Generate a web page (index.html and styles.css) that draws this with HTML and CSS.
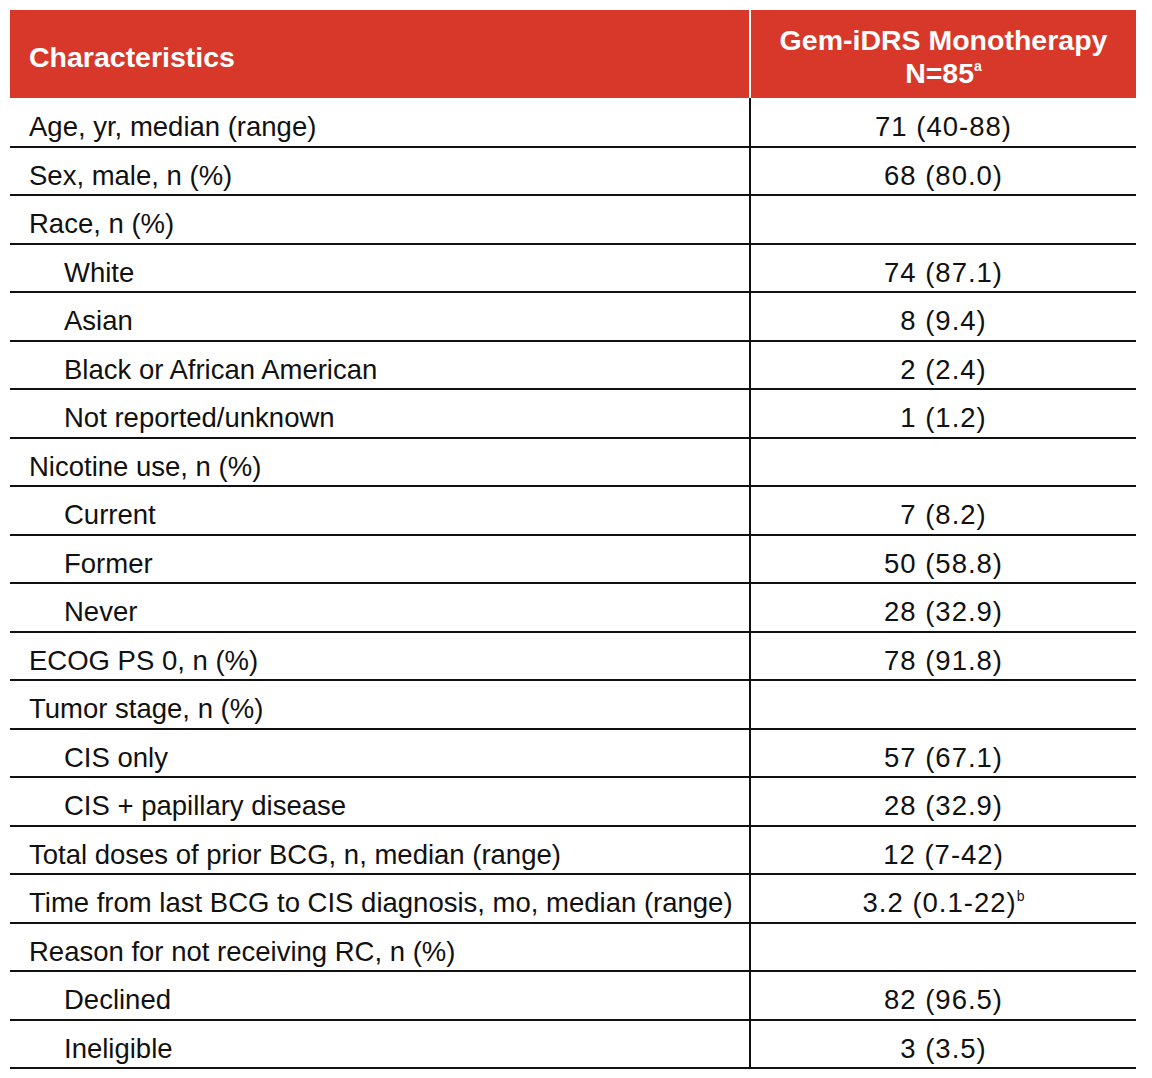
FILE: index.html
```html
<!DOCTYPE html>
<html>
<head>
<meta charset="utf-8">
<link rel="stylesheet" href="styles.css">
</head>
<body>
<table class="tbl">
  <thead>
    <tr class="head">
      <th class="c1">Characteristics</th>
      <th class="c2">Gem-iDRS Monotherapy<br>N=85<sup>a</sup></th>
    </tr>
  </thead>
  <tbody>
    <tr><td class="c1">Age, yr, median (range)</td><td class="c2">71 (40-88)</td></tr>
    <tr><td class="c1">Sex, male, n (%)</td><td class="c2">68 (80.0)</td></tr>
    <tr><td class="c1">Race, n (%)</td><td class="c2"></td></tr>
    <tr><td class="c1 sub">White</td><td class="c2">74 (87.1)</td></tr>
    <tr><td class="c1 sub">Asian</td><td class="c2">8 (9.4)</td></tr>
    <tr><td class="c1 sub">Black or African American</td><td class="c2">2 (2.4)</td></tr>
    <tr><td class="c1 sub">Not reported/unknown</td><td class="c2">1 (1.2)</td></tr>
    <tr><td class="c1">Nicotine use, n (%)</td><td class="c2"></td></tr>
    <tr><td class="c1 sub">Current</td><td class="c2">7 (8.2)</td></tr>
    <tr><td class="c1 sub">Former</td><td class="c2">50 (58.8)</td></tr>
    <tr><td class="c1 sub">Never</td><td class="c2">28 (32.9)</td></tr>
    <tr><td class="c1">ECOG PS 0, n (%)</td><td class="c2">78 (91.8)</td></tr>
    <tr><td class="c1">Tumor stage, n (%)</td><td class="c2"></td></tr>
    <tr><td class="c1 sub">CIS only</td><td class="c2">57 (67.1)</td></tr>
    <tr><td class="c1 sub">CIS + papillary disease</td><td class="c2">28 (32.9)</td></tr>
    <tr><td class="c1">Total doses of prior BCG, n, median (range)</td><td class="c2">12 (7-42)</td></tr>
    <tr><td class="c1">Time from last BCG to CIS diagnosis, mo, median (range)</td><td class="c2">3.2 (0.1-22)<sup>b</sup></td></tr>
    <tr><td class="c1">Reason for not receiving RC, n (%)</td><td class="c2"></td></tr>
    <tr><td class="c1 sub">Declined</td><td class="c2">82 (96.5)</td></tr>
    <tr><td class="c1 sub">Ineligible</td><td class="c2">3 (3.5)</td></tr>
  </tbody>
</table>
</body>
</html>
```

FILE: styles.css
```css
html, body {
  margin: 0;
  padding: 0;
  background: #ffffff;
}
body {
  padding: 10px 16px 0 10px;
  font-family: "Liberation Sans", Arial, sans-serif;
  color: #111111;
}
.tbl {
  width: 1126px;
  border-collapse: collapse;
  table-layout: fixed;
}
.tbl .c1 {
  width: 740px;
  text-align: left;
  padding: 0 0 0 19px;
}
.tbl .c1.sub {
  padding-left: 54px;
}
.tbl .c2 {
  text-align: center;
  padding: 0;
  border-left: 2px solid #111111;
  letter-spacing: 1px;
}
.head th {
  background: #d7382a;
  color: #ffffff;
  font-weight: 700;
  font-size: 28.5px;
  line-height: 33px;
  height: 88px;
  box-sizing: border-box;
  letter-spacing: 0;
}
.tbl .head th.c1 {
  padding-top: 6px;
}
.tbl .head th.c2 {
  border-left: 2px solid #ffffff;
  padding-top: 6px;
  letter-spacing: 0;
}
.head sup {
  font-size: 14px;
  vertical-align: 12px;
  line-height: 0;
}
.tbl tbody td {
  font-size: 27.5px;
  line-height: 32px;
  height: 48.5px;
  box-sizing: border-box;
  border-bottom: 2px solid #111111;
  vertical-align: middle;
  white-space: nowrap;
}
.tbl tbody td.c1,
.tbl tbody td.c2 {
  padding-top: 10px;
  padding-bottom: 0;
}
tbody sup {
  font-size: 14px;
  vertical-align: 11px;
  line-height: 0;
  letter-spacing: 0;
}
```
